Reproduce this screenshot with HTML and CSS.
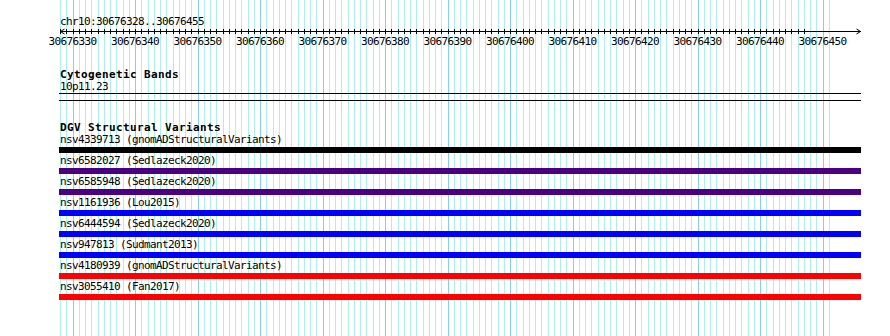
FILE: index.html
```html
<!DOCTYPE html>
<html>
<head>
<meta charset="utf-8">
<link rel="stylesheet" href="styles.css">
</head>
<body>
<div class="page">
  <svg class="grid" width="890" height="336" viewBox="0 0 890 336">
    <path class="grid-minor" d="M60.5 0v336m6-336v336m7-336v336m6-336v336m6-336v336m6-336v336m7-336v336m6-336v336m6-336v336m6-336v336m7-336v336m6-336v336m6-336v336m6-336v336m7-336v336m6-336v336m6-336v336m6-336v336m7-336v336m6-336v336m6-336v336m6-336v336m7-336v336m6-336v336m6-336v336m6-336v336m7-336v336m6-336v336m6-336v336m6-336v336m7-336v336m6-336v336m6-336v336m6-336v336m7-336v336m6-336v336m6-336v336m6-336v336m7-336v336m6-336v336m6-336v336m6-336v336m7-336v336m6-336v336m6-336v336m6-336v336m7-336v336m6-336v336m6-336v336m6-336v336m7-336v336m6-336v336m6-336v336m6-336v336m7-336v336m6-336v336m6-336v336m6-336v336m7-336v336m6-336v336m6-336v336m6-336v336m7-336v336m6-336v336m6-336v336m6-336v336m7-336v336m6-336v336m6-336v336m6-336v336m7-336v336m6-336v336m6-336v336m6-336v336m7-336v336m6-336v336m6-336v336m6-336v336m7-336v336m6-336v336m6-336v336m6-336v336m7-336v336m6-336v336m6-336v336m6-336v336m7-336v336m6-336v336m6-336v336m6-336v336m7-336v336m6-336v336m6-336v336m6-336v336m7-336v336m6-336v336m6-336v336m6-336v336m7-336v336m6-336v336m6-336v336m6-336v336m7-336v336m6-336v336m6-336v336m6-336v336m7-336v336m6-336v336m6-336v336m6-336v336m7-336v336m6-336v336m6-336v336m6-336v336m7-336v336m6-336v336m6-336v336m6-336v336m7-336v336m6-336v336m6-336v336m6-336v336m7-336v336m6-336v336"/>
    <path class="grid-major" d="M73.5 0v336m62-336v336m63-336v336m62-336v336m63-336v336m62-336v336m63-336v336m62-336v336m63-336v336m62-336v336m63-336v336m62-336v336m63-336v336"/>
  </svg>

  <div class="content">
    <div class="position">chr10:30676328..30676455</div>
    <svg class="ruler" width="890" height="7" viewBox="0 0 890 7">
      <path class="ruler-line" d="M60 3.5H861"/>
      <path class="ruler-ticks" d="M60.5 1v5m6-5v5m7-5v5m6-5v5m6-5v5m6-5v5m7-5v5m6-5v5m6-5v5m6-5v5m7-5v5m6-5v5m6-5v5m6-5v5m7-5v5m6-5v5m6-5v5m6-5v5m7-5v5m6-5v5m6-5v5m6-5v5m7-5v5m6-5v5m6-5v5m6-5v5m7-5v5m6-5v5m6-5v5m6-5v5m7-5v5m6-5v5m6-5v5m6-5v5m7-5v5m6-5v5m6-5v5m6-5v5m7-5v5m6-5v5m6-5v5m6-5v5m7-5v5m6-5v5m6-5v5m6-5v5m7-5v5m6-5v5m6-5v5m6-5v5m7-5v5m6-5v5m6-5v5m6-5v5m7-5v5m6-5v5m6-5v5m6-5v5m7-5v5m6-5v5m6-5v5m6-5v5m7-5v5m6-5v5m6-5v5m6-5v5m7-5v5m6-5v5m6-5v5m6-5v5m7-5v5m6-5v5m6-5v5m6-5v5m7-5v5m6-5v5m6-5v5m6-5v5m7-5v5m6-5v5m6-5v5m6-5v5m7-5v5m6-5v5m6-5v5m6-5v5m7-5v5m6-5v5m6-5v5m6-5v5m7-5v5m6-5v5m6-5v5m6-5v5m7-5v5m6-5v5m6-5v5m6-5v5m7-5v5m6-5v5m6-5v5m6-5v5m7-5v5m6-5v5m6-5v5m6-5v5m7-5v5m6-5v5m6-5v5m6-5v5m7-5v5m6-5v5m6-5v5m6-5v5m7-5v5m6-5v5m6-5v5m6-5v5m7-5v5m6-5v5"/>
      <polyline class="ruler-arrow" points="64.5,1 60.5,3.5 64.5,6"/>
      <polyline class="ruler-arrow" points="856.5,1 860.5,3.5 856.5,6"/>
    </svg>
    <div class="scale">
      <span>30676330</span><span>30676340</span><span>30676350</span><span>30676360</span><span>30676370</span><span>30676380</span><span>30676390</span><span>30676400</span><span>30676410</span><span>30676420</span><span>30676430</span><span>30676440</span><span>30676450</span>
    </div>

    <div class="track cyto">
      <div class="track-title">Cytogenetic Bands</div>
      <div class="band-label">10p11.23</div>
    </div>
    <div class="rule"></div>
    <div class="rule rule-second"></div>

    <div class="track dgv">
      <div class="track-title">DGV Structural Variants</div>
      <div class="sv">
        <div class="sv-label">nsv4339713 (gnomADStructuralVariants)</div>
        <div class="sv-bar bar-black"></div>
      </div>
      <div class="sv">
        <div class="sv-label">nsv6582027 (Sedlazeck2020)</div>
        <div class="sv-bar bar-indigo"></div>
      </div>
      <div class="sv">
        <div class="sv-label">nsv6585948 (Sedlazeck2020)</div>
        <div class="sv-bar bar-indigo"></div>
      </div>
      <div class="sv">
        <div class="sv-label">nsv1161936 (Lou2015)</div>
        <div class="sv-bar bar-blue"></div>
      </div>
      <div class="sv">
        <div class="sv-label">nsv6444594 (Sedlazeck2020)</div>
        <div class="sv-bar bar-blue"></div>
      </div>
      <div class="sv">
        <div class="sv-label">nsv947813 (Sudmant2013)</div>
        <div class="sv-bar bar-blue"></div>
      </div>
      <div class="sv">
        <div class="sv-label">nsv4180939 (gnomADStructuralVariants)</div>
        <div class="sv-bar bar-red"></div>
      </div>
      <div class="sv">
        <div class="sv-label">nsv3055410 (Fan2017)</div>
        <div class="sv-bar bar-red"></div>
      </div>
    </div>
  </div>
</div>
</body>
</html>
```

FILE: styles.css
```css
html, body {
  margin: 0;
  padding: 0;
  background: #ffffff;
}

.page {
  position: relative;
  width: 890px;
  height: 336px;
  overflow: hidden;
  background: #ffffff;
  color: #000000;
  font-family: "DejaVu Sans Mono", "Liberation Mono", monospace;
  font-size: 11px;
  letter-spacing: -0.62px;
}

.grid {
  position: absolute;
  left: 0;
  top: 0;
  z-index: 0;
}

.grid-minor {
  stroke: #afeeee;
  stroke-width: 1;
  shape-rendering: crispEdges;
  fill: none;
}

.grid-major {
  stroke: #87ceeb;
  stroke-width: 1;
  shape-rendering: crispEdges;
  fill: none;
}

.content {
  position: relative;
  z-index: 1;
  padding-top: 15px;
}

.position {
  margin-left: 60px;
  height: 13px;
  line-height: 13px;
}

.ruler {
  display: block;
}

.ruler-line,
.ruler-ticks {
  stroke: #000000;
  stroke-width: 1;
  shape-rendering: crispEdges;
  fill: none;
}

.ruler-arrow {
  stroke: #000000;
  stroke-width: 1;
  fill: none;
}

.scale {
  display: flex;
  margin-left: 41.25px;
  height: 13px;
  line-height: 13px;
}

.scale span {
  flex: none;
  width: 62.5px;
  text-align: center;
}

.cyto {
  margin-top: 21px;
}

.track-title {
  margin-left: 60px;
  height: 12px;
  line-height: 12px;
  font-weight: bold;
  letter-spacing: 0.38px;
}

.band-label {
  margin-left: 60px;
  height: 12px;
  line-height: 12px;
}

.rule {
  margin-left: 59px;
  width: 802px;
  height: 1px;
  background: #000000;
}

.rule-second {
  margin-top: 6px;
}

.dgv {
  margin-top: 21px;
}

.sv-label {
  margin-left: 60px;
  height: 13px;
  line-height: 12px;
  white-space: nowrap;
}

.sv-bar {
  margin-left: 59px;
  width: 802px;
  height: 6px;
  margin-bottom: 2px;
}

.bar-black { background: #000000; }
.bar-indigo { background: #4b0082; }
.bar-blue { background: #0000ff; }
.bar-red { background: #ff0000; }
```
